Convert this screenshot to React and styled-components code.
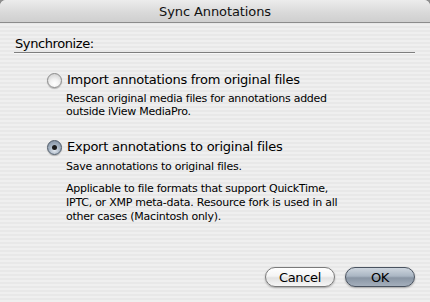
import React from 'react';
import styled, { createGlobalStyle } from 'styled-components';

const GlobalStyle = createGlobalStyle`
  html, body {
    margin: 0;
    padding: 0;
    background: #8e8e8e;
  }
  body {
    font-family: "DejaVu Sans", "Liberation Sans", sans-serif;
    color: #000;
  }
`;

const Window = styled.div`
  width: 430px;
  height: 302px;
  display: flex;
  flex-direction: column;
  border-radius: 6px 6px 0 0;
  overflow: hidden;
  background: repeating-linear-gradient(
    to bottom,
    #efefef 0px,
    #efefef 2px,
    #e8e8e8 2px,
    #e8e8e8 4px
  );
`;

const TitleBar = styled.div`
  height: 22px;
  flex: none;
  display: flex;
  align-items: center;
  justify-content: center;
  background: linear-gradient(to bottom, #ececec 0%, #dadada 55%, #cfcfcf 100%);
  border-bottom: 1px solid #8c8c8c;
  font-size: 13px;
  letter-spacing: -0.1px;
  color: #111;
`;

const Content = styled.div`
  flex: 1;
  display: flex;
  flex-direction: column;
  padding: 13px 15px 15px 14px;
`;

const SectionHeader = styled.div`
  font-size: 13px;
  line-height: 16px;
  letter-spacing: -0.4px;
  padding-left: 1px;
  border-bottom: 1px solid #7e7e7e;
  box-shadow: 0 1px 0 #f8f8f8;
`;

const Options = styled.div`
  display: flex;
  flex-direction: column;
  padding-left: 33px;
`;

const Option = styled.div`
  margin-top: ${p => p.$top}px;
`;

const OptionLabel = styled.label`
  display: flex;
  align-items: center;
  gap: 5px;
  font-size: 13px;
  line-height: 16px;
  letter-spacing: -0.25px;
`;

const Radio = styled.span`
  width: 13px;
  height: 13px;
  flex: none;
  border-radius: 50%;
  border: 1px solid ${p => (p.$checked ? '#4f5b69' : '#8a8a8a')};
  background: ${p =>
    p.$checked
      ? 'radial-gradient(circle at 50% 72%, #e4eaf1 0%, #a9b6c5 45%, #768496 100%)'
      : 'radial-gradient(circle at 50% 75%, #ffffff 0%, #f1f1f1 40%, #c8c8c8 100%)'};
  box-shadow: 0 1px 1px rgba(0, 0, 0, 0.25);
  display: flex;
  align-items: center;
  justify-content: center;
  &::after {
    content: '';
    display: ${p => (p.$checked ? 'block' : 'none')};
    width: 5px;
    height: 5px;
    border-radius: 50%;
    background: #1c1c1c;
  }
`;

const Description = styled.p`
  margin: ${p => p.$top || 0}px 0 0 19px;
  font-size: 11px;
  line-height: ${p => p.$lh || 13}px;
  letter-spacing: -0.25px;
`;

const ButtonRow = styled.div`
  margin-top: auto;
  display: flex;
  justify-content: flex-end;
  gap: 10px;
`;

const Button = styled.button`
  width: 70px;
  height: 20px;
  border-radius: 10px;
  font-family: inherit;
  font-size: 13px;
  letter-spacing: -0.3px;
  color: #000;
  padding: 0;
  border: 1px solid ${p => (p.$primary ? '#4a5360' : '#7a7a7a')};
  background: ${p =>
    p.$primary
      ? 'linear-gradient(to bottom, #cdd5de 0%, #aab6c3 45%, #8995a4 55%, #a4afbc 100%)'
      : 'linear-gradient(to bottom, #ffffff 0%, #f4f4f4 45%, #e2e2e2 55%, #f6f6f6 100%)'};
  box-shadow: 0 1px 2px rgba(0, 0, 0, 0.3);
`;

export default function App() {
  return (
    <>
      <GlobalStyle />
      <Window>
        <TitleBar>Sync Annotations</TitleBar>
        <Content>
          <SectionHeader>Synchronize:</SectionHeader>
          <Options>
            <Option $top={19}>
              <OptionLabel>
                <Radio />
                Import annotations from original files
              </OptionLabel>
              <Description $top={4}>
                Rescan original media files for annotations added
                <br />
                outside iView MediaPro.
              </Description>
            </Option>
            <Option $top={21}>
              <OptionLabel>
                <Radio $checked />
                Export annotations to original files
              </OptionLabel>
              <Description $top={5}>Save annotations to original files.</Description>
              <Description $top={9} $lh={14}>
                Applicable to file formats that support QuickTime,
                <br />
                IPTC, or XMP meta-data. Resource fork is used in all
                <br />
                other cases (Macintosh only).
              </Description>
            </Option>
          </Options>
          <ButtonRow>
            <Button>Cancel</Button>
            <Button $primary>OK</Button>
          </ButtonRow>
        </Content>
      </Window>
    </>
  );
}
